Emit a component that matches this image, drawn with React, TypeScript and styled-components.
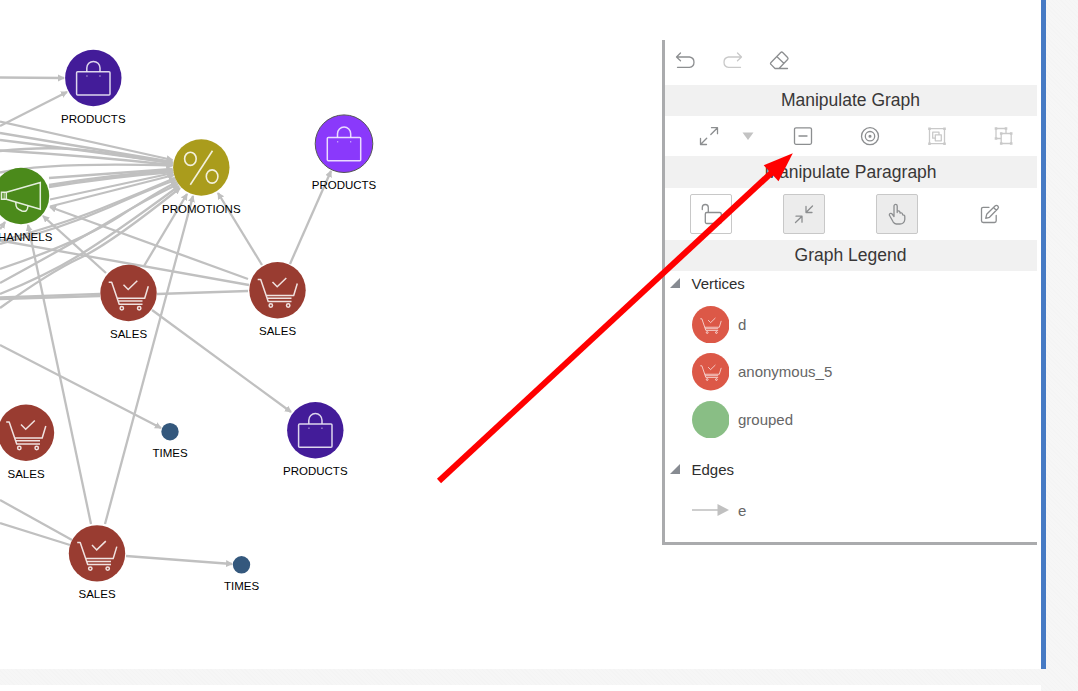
import React from "react";
import styled, { createGlobalStyle } from "styled-components";

const GlobalStyle = createGlobalStyle`
  * { box-sizing: border-box; }
  body {
    margin: 0;
    overflow: hidden;
    font-family: "Liberation Sans", Arial, sans-serif;
  }
`;

const Page = styled.div`
  position: relative;
  width: 1078px;
  height: 691px;
  overflow: hidden;
  background: repeating-linear-gradient(45deg, #f6f6f6 0 2px, #f4f4f4 2px 3px);
`;

const Workspace = styled.main`
  position: relative;
  display: flex;
  justify-content: flex-end;
  width: 1046px;
  height: 669px;
  padding: 40px 4px 0 0;
  border-right: 5px solid #467ac4;
  background: #fff;
`;

const NextBlock = styled.div`
  width: 1041px;
  height: 6px;
  margin-top: 16px;
  background: #fff;
`;

const Canvas = styled.svg`
  position: absolute;
  left: 0;
  top: 0;
`;

const Pointer = styled(Canvas)`
  pointer-events: none;
`;

const Panel = styled.aside`
  position: relative;
  width: 375px;
  height: 505px;
  border-left: 3px solid #aaabad;
  border-bottom: 3px solid #aaabad;
  background: #fff;
`;

const Heading = styled.h2<{ $h?: number }>`
  margin: 0;
  padding-right: 1px;
  height: ${(p) => p.$h ?? 31}px;
  line-height: ${(p) => p.$h ?? 31}px;
  background: #f1f1f1;
  color: #393737;
  font-size: 17.5px;
  font-weight: 400;
  text-align: center;
`;

const HistoryBar = styled.div`
  display: flex;
  align-items: center;
  gap: 23px;
  height: 45px;
  padding: 0 0 4px 9px;
`;

const GraphBar = styled.div`
  display: flex;
  align-items: center;
  gap: 43px;
  height: 40px;
  padding-left: 32px;
`;

const ExpandGroup = styled.div`
  display: flex;
  align-items: center;
  gap: 21px;
  width: 51px;
`;

const Caret = styled.svg`
  flex: none;
`;

const ParagraphBar = styled.div`
  display: grid;
  grid-template-columns: repeat(4, 93px);
  place-items: center;
  height: 52px;
  padding-right: 2px;
  margin-left: -1px;
`;

const ToolButton = styled.button<{ $on?: boolean; $plain?: boolean }>`
  display: flex;
  align-items: center;
  justify-content: center;
  width: 42px;
  height: 40px;
  padding: 0;
  border: 1px solid ${(p) => (p.$plain ? "transparent" : "#c8c8c8")};
  border-radius: 2px;
  background: ${(p) => (p.$on ? "#ececec" : "transparent")};
`;

const Icon = styled.svg<{ $dim?: boolean }>`
  display: block;
  flex: none;
  overflow: visible;
  fill: none;
  stroke: ${(p) => (p.$dim ? "#c9c9c9" : "#8c8e90")};
  stroke-width: 1.3;
  stroke-linecap: round;
  stroke-linejoin: round;
`;

const LegendTitle = styled.div`
  display: flex;
  align-items: center;
  gap: 11.5px;
  height: 24px;
  padding-left: 5px;
  color: #2e2e2e;
  font-size: 15px;
`;

const LegendList = styled.div<{ $row: number }>`
  display: grid;
  grid-auto-rows: ${(p) => p.$row}px;
  align-items: center;
  padding: 5.5px 0 0 26.5px;
`;

const LegendRow = styled.div`
  display: flex;
  align-items: center;
  gap: 9px;
  color: #666;
  font-size: 15px;
`;

const Spacer = styled.div`
  height: 14px;
`;

const Label = styled.text`
  font-size: 11.5px;
  text-anchor: middle;
  fill: #000;
`;

const Cart = () => (
  <g fill="none" stroke="#fff" strokeOpacity={0.85} strokeWidth={1.5}>
    <path d="M-19.8-10.8H-16.8L-9.3 11.2H14M-11.3 5.2H16.2L19.8-6.8M-10.3 8H14" strokeLinejoin="round" />
    <path d="M-5-8.3L-.3-3.5L8.8-12.3" />
    <circle cx={-6.7} cy={15.2} r={1.7} />
    <circle cx={10.7} cy={15.2} r={1.7} />
  </g>
);

const Bag = () => (
  <g fill="none" stroke="#fff" strokeOpacity={0.82} strokeWidth={1.5}>
    <rect x={-16.7} y={-6.3} width={33.4} height={23.4} rx={1} />
    <path d="M-6.5-6.5V-10a6.6 6.6 0 0 1 13.2 0v3.5" />
    <path d="M-7-2h1.3M6-2h1.3" strokeOpacity={0.5} />
  </g>
);

const Percent = () => (
  <g fill="none" stroke="#fff" strokeOpacity={0.85} strokeWidth={1.6}>
    <ellipse cx={-10.9} cy={-8.7} rx={5.8} ry={6.6} />
    <ellipse cx={10.8} cy={9} rx={5.8} ry={6.6} />
    <path d="M11.2-16.7L-11 17.3" />
  </g>
);

const Megaphone = () => (
  <g fill="none" stroke="#fff" strokeOpacity={0.85} strokeWidth={1.5}>
    <path d="M-19.5-3.7h4.8v7h-4.8zM-14.7-3.7L19.3-13.5V13.3L-14.7 3.3M-5.3 6.5C-5 12-4 13 1 15c4 1 5.5-.5 6-5" />
    <path d="M-16.8-3.7v7" strokeOpacity={0.5} />
  </g>
);

type Kind = "sales" | "product" | "active" | "promo" | "channel" | "time";

const KINDS: Record<Kind, { fill: string; r: number; dy: number; art?: React.ReactNode }> = {
  sales: { fill: "#993c31", r: 28.2, dy: 45, art: <Cart /> },
  product: { fill: "#431c99", r: 28.2, dy: 45, art: <Bag /> },
  active: { fill: "#8a39fb", r: 28.8, dy: 45.3, art: <Bag /> },
  promo: { fill: "#aa9c1c", r: 28.2, dy: 45.3, art: <Percent /> },
  channel: { fill: "#4b8a1b", r: 28.2, dy: 45, art: <Megaphone /> },
  time: { fill: "#34587d", r: 8.7, dy: 25.3 },
};

const NODES: { x: number; y: number; kind: Kind; label: string }[] = [
  { x: 93.3, y: 78, kind: "product", label: "PRODUCTS" },
  { x: 344, y: 143.7, kind: "active", label: "PRODUCTS" },
  { x: 201.3, y: 167.5, kind: "promo", label: "PROMOTIONS" },
  { x: 21, y: 196, kind: "channel", label: "CHANNELS" },
  { x: 128.5, y: 293, kind: "sales", label: "SALES" },
  { x: 277.5, y: 290.3, kind: "sales", label: "SALES" },
  { x: 26, y: 432.8, kind: "sales", label: "SALES" },
  { x: 97, y: 553.4, kind: "sales", label: "SALES" },
  { x: 315.3, y: 430.2, kind: "product", label: "PRODUCTS" },
  { x: 170, y: 431.7, kind: "time", label: "TIMES" },
  { x: 241.5, y: 564.8, kind: "time", label: "TIMES" },
];

const ARROWS = [
  "M0 77.5L64 78",
  "M0 126L67 92",
  "M0 121.5L172.500 160",
  "M0 133L172.500 162",
  "M0 140Q90 151 172.500 163",
  "M0 151Q55 145 100 152L172.500 163",
  "M0 150.500Q90 156 172.500 165",
  "M0 172.500Q50 162 172.500 165.500",
  "M49 178L172.500 169",
  "M49 185Q110 175 173 170.500",
  "M49 187Q110 177 173 172",
  "M50 199.500L173 173",
  "M50 206.500Q110 191 174 175",
  "M0 241Q60 225 100 209T175 178",
  "M0 244Q60 229 110 207T176 180",
  "M0 269Q80 242 120 216T177 182",
  "M0 283Q75 242 110 221T178 184",
  "M0 294Q45 276 78 256T179 186",
  "M0 308Q50 272 80 258T180 188",
  "M0 229L5 222",
  "M106 273L43 216",
  "M248 279L50 207",
  "M91 524L28 225",
  "M105 524L193 196",
  "M144 266L187 194",
  "M262 265L218 193",
  "M290 264L331 171",
  "M152 310L291 412",
  "M0 345L161 428",
  "M126 556L232 564",
];

const LINES = [
  "M249 285L0 240.500",
  "M248 291L157 294",
  "M100 293.800L0 297.300",
  "M100 296L0 299",
  "M0 500L72 540",
  "M0 523L70 545",
];

const Graph = () => (
  <Canvas width={1041} height={669}>
    <defs>
      <marker id="tip" markerUnits="userSpaceOnUse" markerWidth={8} markerHeight={8} refX={6} refY={3.5} orient="auto">
        <path d="M0 0L7 3.500L0 7Z" fill="#c0c0c0" />
      </marker>
    </defs>
    <g fill="none" stroke="#c0c0c0" strokeWidth={2.3}>
      {LINES.map((d) => (
        <path key={d} d={d} />
      ))}
      {ARROWS.map((d) => (
        <path key={d} d={d} markerEnd="url(#tip)" />
      ))}
    </g>
    {NODES.map((n) => {
      const k = KINDS[n.kind];
      return (
        <g key={`${n.x}-${n.y}`} transform={`translate(${n.x} ${n.y})`}>
          <circle r={k.r} fill={k.fill} stroke={n.kind === "active" ? "#555" : "none"} />
          {k.art}
          <Label y={k.dy}>{n.label}</Label>
        </g>
      );
    })}
  </Canvas>
);

const Swatch = ({ color, cart }: { color: string; cart?: boolean }) => (
  <svg width={37.5} height={37.5} viewBox="-28 -28 56 56">
    <circle r={28} fill={color} />
    {cart && (
      <g transform="scale(.79) translate(0 -.5)">
        <Cart />
      </g>
    )}
  </svg>
);

const Collapse = () => (
  <svg width={10} height={10}>
    <path d="M10 0V10H0Z" fill="#878b92" />
  </svg>
);

export default function App() {
  return (
    <Page>
      <GlobalStyle />
      <Workspace>
        <Graph />
        <Panel>
          <HistoryBar>
            <Icon width={24} height={20}>
              <path d="M6.500 2L2.500 6L6.500 9.700M2.500 6H15.500a5.200 5.200 0 0 1 0 10.300H3.500" />
            </Icon>
            <Icon width={24} height={20} $dim>
              <path d="M16.500 2L20.500 6L16.500 9.700M20.500 6H7.500a5.200 5.200 0 0 0 0 10.300H19.500" />
            </Icon>
            <Icon width={24} height={20}>
              <path d="M7 17.500H19.500M7 17.500L3 13.400Q2 12.500 3 11.500L12.700 1.500Q13.700.5 14.700 1.500L19.600 6.500Q20.500 7.500 19.600 8.500L11 17.500M9 5.800L15.800 12.300" />
            </Icon>
          </HistoryBar>
          <Heading>Manipulate Graph</Heading>
          <GraphBar>
            <ExpandGroup>
              <Icon width={24} height={24}>
                <path d="M13.800 10.500L20.300 4M14.500 3.700h6v6M9.700 14.200L3.500 20.500M3.500 14.500v6h6" />
              </Icon>
              <Caret width={12} height={8}>
                <path d="M.5 .5H11.500L6 8Z" fill="#c3c3c3" />
              </Caret>
            </ExpandGroup>
            <Icon width={24} height={24}>
              <rect x={3.500} y={3.800} width={17} height={16.500} rx={1.500} />
              <path d="M8 12h8" />
            </Icon>
            <Icon width={24} height={24}>
              <circle cx={12} cy={12.200} r={8.500} />
              <circle cx={12} cy={12.200} r={4.700} />
              <circle cx={12} cy={12.200} r={0.900} fill="#8c8e90" />
            </Icon>
            <Icon width={24} height={24} $dim>
              <rect x={4.500} y={4.700} width={15} height={15} />
              <path d="M10.500 14.200H7.700V8.200H14v2.500M10.300 10.800h6v6h-6z" />
              <path d="M3.200 4.700h2.600M18.200 4.700h2.600M3.200 19.700h2.600M18.200 19.700h2.600" strokeWidth={2.600} strokeLinecap="butt" />
            </Icon>
            <Icon width={24} height={24} $dim>
              <path d="M9 14.500H4V4.500H14V9.500M9.200 9.500H19.200V19.500H9.200Z" />
              <path d="M2.700 4.500h2.600M12.700 4.500h2.600M2.700 14.500h2.600M7.900 9.500h2.600M17.900 9.500h2.600M7.900 19.500h2.600M17.900 19.500h2.600" strokeWidth={2.600} strokeLinecap="butt" />
            </Icon>
          </GraphBar>
          <Heading $h={32}>Manipulate Paragraph</Heading>
          <ParagraphBar>
            <ToolButton aria-label="Unlock">
              <Icon width={24} height={24}>
                <path d="M3.300 7.500V5.500a3 3 0 0 1 6 0V10" />
                <rect x={6.300} y={10.500} width={16} height={11} rx={1.500} />
              </Icon>
            </ToolButton>
            <ToolButton $on aria-label="Shrink">
              <Icon width={24} height={24}>
                <path d="M20.500 4L14.200 10.200M14 4.500v6h6M3.500 20.500L9.700 14.500M4 14.200h6v6" />
              </Icon>
            </ToolButton>
            <ToolButton $on aria-label="Pan">
              <Icon width={24} height={24}>
                <path d="M9 14.500V4a1.600 1.600 0 0 1 3.200 0V10.500M12.200 9q2.600-.6 2.800 1.500v.5q2.300-.6 2.600 1.300v.5q2.200-.2 2.200 2V17.500q-.6 4.500-5 4.500h-3.500q-2-.2-3.200-2.200L4.300 13q.2-2.300 2.500-1.300L9 14.500" />
              </Icon>
            </ToolButton>
            <ToolButton $plain aria-label="Edit">
              <Icon width={24} height={24}>
                <path d="M11 5.300H5.200Q3.500 5.300 3.500 7V18.700Q3.500 20.500 5.200 20.500H16.500Q18.200 20.500 18.200 18.700V13.500M7.700 16.300l1-4L17 4a1.900 1.900 0 0 1 2.800 2.800L11.500 15.300ZM15.500 5.500l2.800 2.800" />
              </Icon>
            </ToolButton>
          </ParagraphBar>
          <Heading>Graph Legend</Heading>
          <LegendTitle>
            <Collapse />
            Vertices
          </LegendTitle>
          <LegendList $row={47.500}>
            <LegendRow>
              <Swatch color="#dc5847" cart />d
            </LegendRow>
            <LegendRow>
              <Swatch color="#dc5847" cart />
              anonymous_5
            </LegendRow>
            <LegendRow>
              <Swatch color="#89be85" />
              grouped
            </LegendRow>
          </LegendList>
          <Spacer />
          <LegendTitle>
            <Collapse />
            Edges
          </LegendTitle>
          <LegendList $row={47}>
            <LegendRow>
              <svg width={37.500} height={12}>
                <path d="M0 6H26" stroke="#c6c6c6" strokeWidth={1.700} />
                <path d="M25.500 0V12L37 6Z" fill="#c0c0c0" />
              </svg>
              e
            </LegendRow>
          </LegendList>
        </Panel>
        <Pointer width={1041} height={669}>
          <path d="M439 481L775 169.500" stroke="#f00" strokeWidth={6} />
          <path d="M792.800 153.200L763.700 165.300L778.500 181.200Z" fill="#f00" />
        </Pointer>
      </Workspace>
      <NextBlock />
    </Page>
  );
}
